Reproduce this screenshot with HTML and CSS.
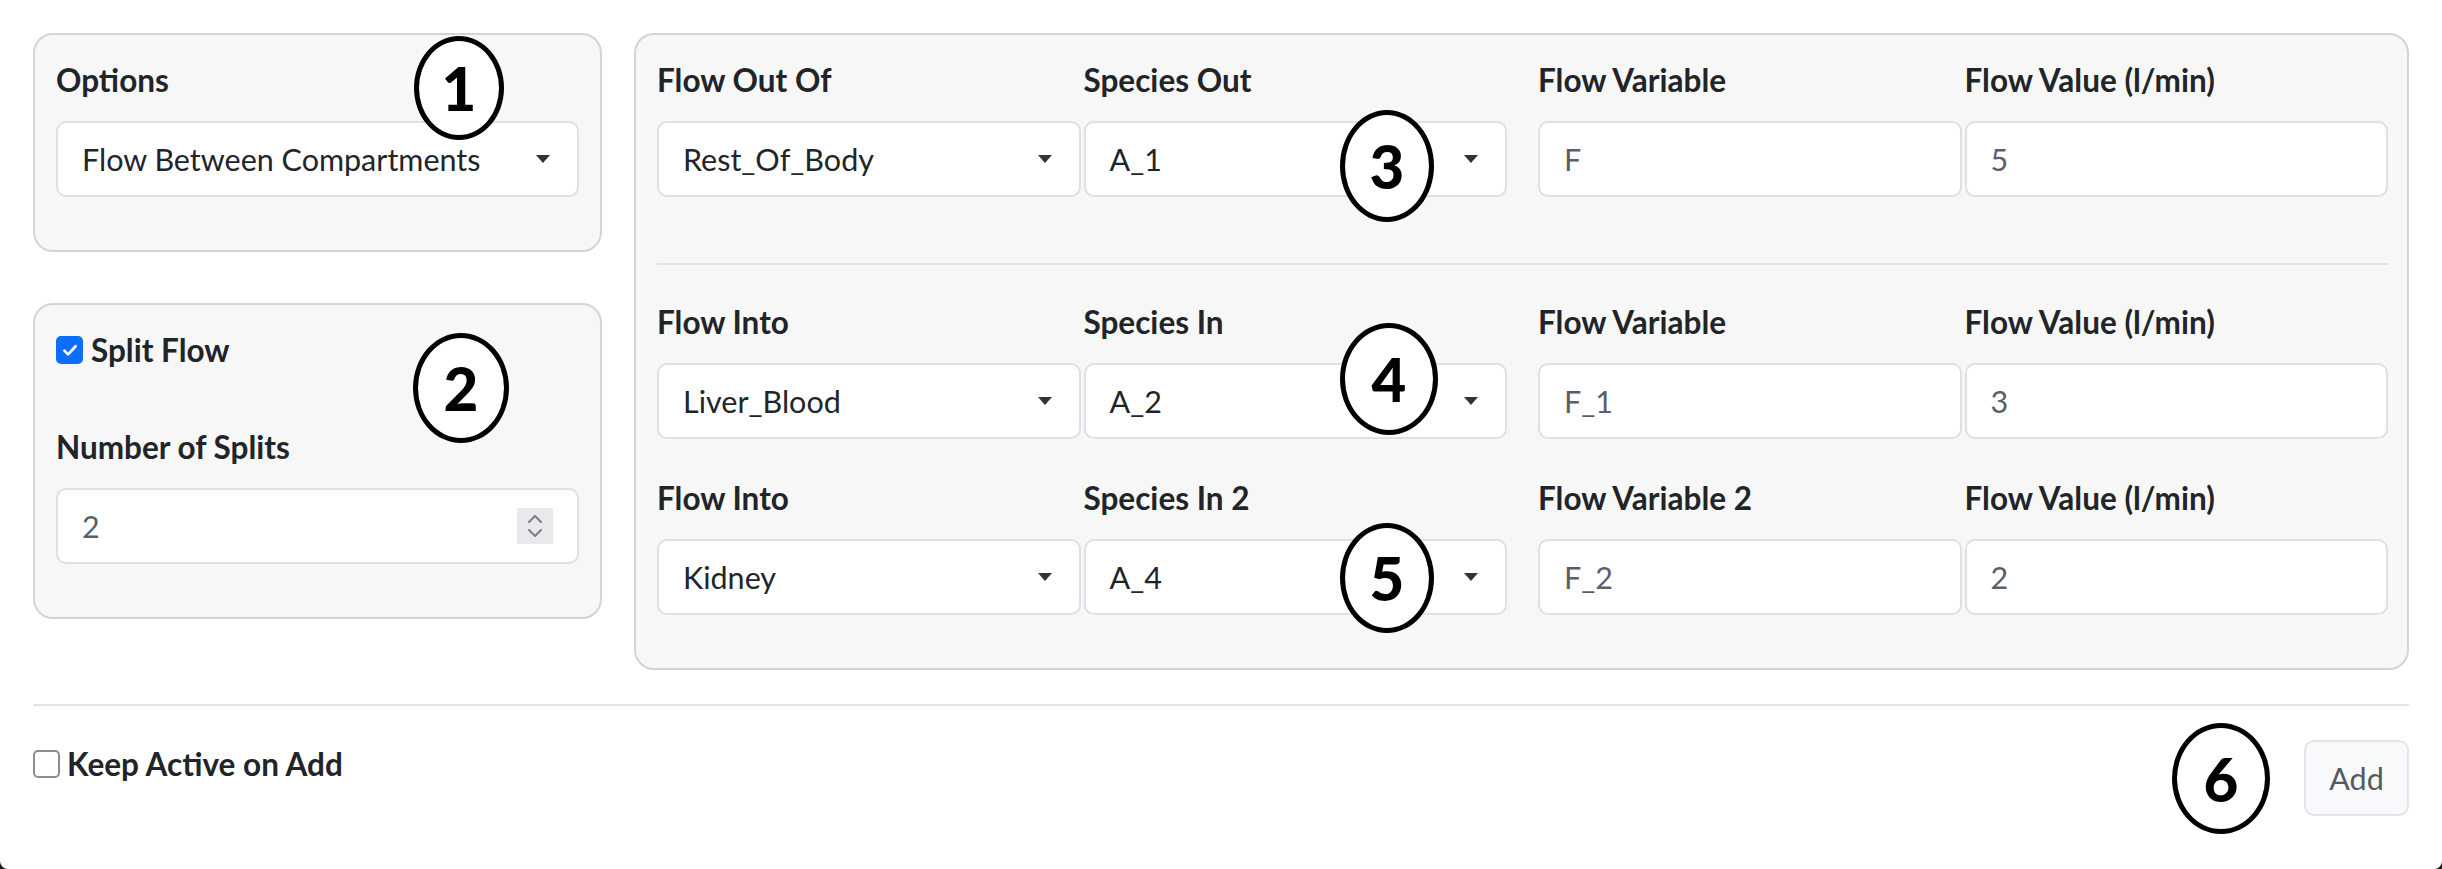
FILE: index.html
```html
<!DOCTYPE html>
<html lang="en">
<head>
<meta charset="utf-8">
<title>Flow Between Compartments</title>
<link rel="stylesheet" href="styles.css">
</head>
<body>
<div class="page">
  <div class="top">
    <div class="left-col">
      <div class="card">
        <div class="group last">
          <div class="lbl">Options</div>
          <div class="select"><span>Flow Between Compartments</span><i class="caret"></i></div>
        </div>
      </div>
      <div class="card">
        <div class="check-row split">
          <span class="cb checked"><svg viewBox="0 0 16 16" width="20" height="20"><path d="M3.5 8.5l3 3 6-6.5" fill="none" stroke="#fff" stroke-width="2.2" stroke-linecap="round" stroke-linejoin="round"/></svg></span>
          <span class="cb-label">Split Flow</span>
        </div>
        <div class="group last">
          <div class="lbl">Number of Splits</div>
          <div class="input number"><span class="val">2</span><span class="spinner"><svg viewBox="0 0 36 36" width="36" height="36"><path d="M12 14l6-6 6 6M12 22l6 6 6-6" fill="none" stroke="#7a7f86" stroke-width="2" stroke-linecap="round" stroke-linejoin="round"/></svg></span></div>
        </div>
      </div>
    </div>

    <div class="card main">
      <div class="flow-row">
        <div class="half">
          <div class="group">
            <div class="lbl">Flow Out Of</div>
            <div class="select"><span>Rest_Of_Body</span><i class="caret"></i></div>
          </div>
          <div class="group">
            <div class="lbl">Species Out</div>
            <div class="select"><span>A_1</span><i class="caret"></i></div>
          </div>
        </div>
        <div class="half">
          <div class="group">
            <div class="lbl">Flow Variable</div>
            <div class="input"><span class="val">F</span></div>
          </div>
          <div class="group">
            <div class="lbl">Flow Value (l/min)</div>
            <div class="input"><span class="val">5</span></div>
          </div>
        </div>
      </div>
      <hr class="sep">
      <div class="flow-row">
        <div class="half">
          <div class="group">
            <div class="lbl">Flow Into</div>
            <div class="select"><span>Liver_Blood</span><i class="caret"></i></div>
          </div>
          <div class="group">
            <div class="lbl">Species In</div>
            <div class="select"><span>A_2</span><i class="caret"></i></div>
          </div>
        </div>
        <div class="half">
          <div class="group">
            <div class="lbl">Flow Variable</div>
            <div class="input"><span class="val">F_1</span></div>
          </div>
          <div class="group">
            <div class="lbl">Flow Value (l/min)</div>
            <div class="input"><span class="val">3</span></div>
          </div>
        </div>
      </div>
      <div class="flow-row last">
        <div class="half">
          <div class="group">
            <div class="lbl">Flow Into</div>
            <div class="select"><span>Kidney</span><i class="caret"></i></div>
          </div>
          <div class="group">
            <div class="lbl">Species In 2</div>
            <div class="select"><span>A_4</span><i class="caret"></i></div>
          </div>
        </div>
        <div class="half">
          <div class="group">
            <div class="lbl">Flow Variable 2</div>
            <div class="input"><span class="val">F_2</span></div>
          </div>
          <div class="group">
            <div class="lbl">Flow Value (l/min)</div>
            <div class="input"><span class="val">2</span></div>
          </div>
        </div>
      </div>
    </div>
  </div>

  <hr class="divider">

  <div class="bottom">
    <div class="check-row keep">
      <span class="cb"></span>
      <span class="cb-label">Keep Active on Add</span>
    </div>
    <button class="btn" type="button">Add</button>
  </div>

  <div class="marker m1">1</div>
  <div class="marker m2">2</div>
  <div class="marker m3">3</div>
  <div class="marker m4">4</div>
  <div class="marker m5">5</div>
  <div class="marker m6">6</div>
</div>
</body>
</html>
```

FILE: styles.css
```css
html {
  background: #1a1a1a;
}
body {
  margin: 0;
  height: 869px;
  background: #ffffff;
  border-radius: 0 0 8px 8px;
  overflow: hidden;
  font-family: "Lato", "Liberation Sans", sans-serif;
  color: #212529;
}
.page {
  position: relative;
  padding: 33px 33px 0 33px;
}
.top {
  display: flex;
  gap: 32px;
  align-items: flex-start;
}
.left-col {
  width: 569px;
  display: flex;
  flex-direction: column;
  gap: 51px;
}
.card {
  box-sizing: border-box;
  background: #f7f7f7;
  border: 2px solid #d4d4d4;
  border-radius: 20px;
  padding: 25px 21px 53px 21px;
}
.card.main {
  flex: 1;
  padding: 25px 19px 53px 21px;
}
.group {
  margin-bottom: 39px;
}
.group.last,
.flow-row.last .group {
  margin-bottom: 0;
}
.lbl {
  font-size: 31.5px;
  font-weight: 700;
  line-height: 40px;
  height: 40px;
  margin-bottom: 21px;
  white-space: nowrap;
  color: #212529;
}
.select,
.input {
  box-sizing: border-box;
  height: 76px;
  background: #ffffff;
  border: 2px solid #dde1e6;
  border-radius: 10px;
  padding: 0 26px 0 24px;
  display: flex;
  align-items: center;
  justify-content: space-between;
  font-size: 30.5px;
  white-space: nowrap;
}
.select span {
  color: #212529;
}
.input .val {
  color: #5a6067;
}
.caret {
  width: 0;
  height: 0;
  border-left: 7px solid transparent;
  border-right: 7px solid transparent;
  border-top: 8px solid #333333;
  margin-right: 1px;
}
.number {
  padding-right: 24px;
}
.spinner {
  width: 36px;
  height: 36px;
  background: #e9e9ed;
  display: flex;
}
.flow-row {
  display: grid;
  grid-template-columns: 1fr 1fr;
  column-gap: 31px;
}
.half {
  display: grid;
  grid-template-columns: 1fr 1fr;
  column-gap: 3px;
}
.sep {
  border: 0;
  border-top: 2px solid #e3e3e3;
  margin: 27px 0 37px 0;
}
.check-row {
  display: flex;
  align-items: center;
  gap: 8px;
  height: 40px;
}
.check-row.split {
  margin-bottom: 57px;
}
.cb {
  box-sizing: border-box;
  width: 27px;
  height: 28px;
  border-radius: 5px;
  border: 2px solid #8c8c96;
  background: #ffffff;
  display: flex;
  align-items: center;
  justify-content: center;
  flex-shrink: 0;
}
.cb.checked {
  background: #0d6efd;
  border-color: #0d6efd;
}
.cb-label {
  font-size: 31.5px;
  font-weight: 700;
  color: #212529;
}
.divider {
  border: 0;
  border-top: 2px solid #e3e3e3;
  margin: 34px 0 34px 0;
}
.bottom {
  display: flex;
  justify-content: space-between;
  align-items: flex-start;
}
.check-row.keep {
  margin-top: 4px;
  gap: 7px;
}
.btn {
  box-sizing: border-box;
  width: 105px;
  height: 76px;
  background: #f8f9fa;
  border: 2px solid #e2e5e9;
  border-radius: 10px;
  font-family: "Lato", "Liberation Sans", sans-serif;
  font-size: 30.5px;
  color: #555a60;
  padding: 0;
}
.marker {
  position: absolute;
  box-sizing: border-box;
  border: 5px solid #000000;
  border-radius: 50%;
  background: #ffffff;
  display: flex;
  align-items: center;
  justify-content: center;
  font-family: "Lato", "Liberation Sans", sans-serif;
  font-weight: 900;
  font-size: 60px;
  color: #000000;
  line-height: 1;
}
.m1 { left: 414px; top: 36px; width: 90px; height: 104px; }
.m2 { left: 413px; top: 333px; width: 96px; height: 110px; }
.m3 { left: 1340px; top: 110px; width: 94px; height: 112px; }
.m4 { left: 1340px; top: 323px; width: 98px; height: 112px; }
.m5 { left: 1340px; top: 523px; width: 94px; height: 110px; }
.m6 { left: 2172px; top: 723px; width: 98px; height: 111px; }
```
